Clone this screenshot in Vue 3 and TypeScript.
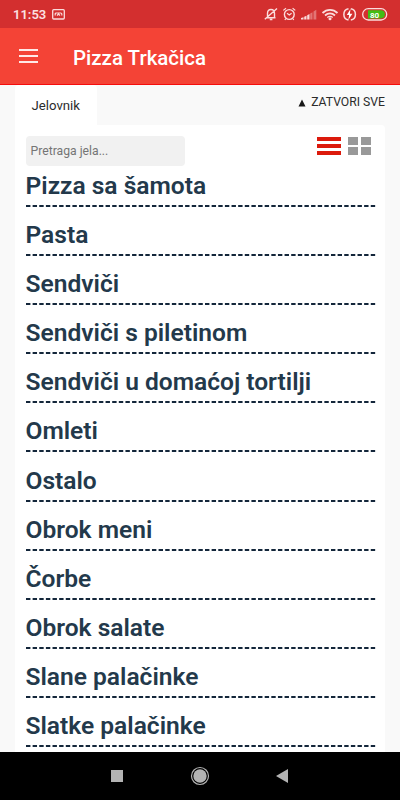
<script setup lang="ts">
const categories: string[] = [
  'Pizza sa šamota',
  'Pasta',
  'Sendviči',
  'Sendviči s piletinom',
  'Sendviči u domaćoj tortilji',
  'Omleti',
  'Ostalo',
  'Obrok meni',
  'Čorbe',
  'Obrok salate',
  'Slane palačinke',
  'Slatke palačinke',
]
</script>

<template>
  <div class="screen">
    <div class="status">
      <span class="clock">11:53</span>
      <svg class="voicemail" width="13" height="11" viewBox="0 0 13 11" fill="none" stroke="#fbdcdc">
        <rect x=".7" y=".7" width="11.6" height="9.3" rx="1" stroke-width="1.3" />
        <path d="M3.200 6.500V5a1 1 0 0 1 1-1h4.600a1 1 0 0 1 1 1v1.500M5 6.500l1.500-1.500L8 6.500" stroke-width="1.200" />
      </svg>
      <svg class="tray" width="128" height="16" viewBox="0 0 128 16" fill="none" stroke="#fbdcdc" stroke-width="1.2">
        <path d="M2.500 11.800h9M3.500 11.500V7.500c0-2.500 1.300-4 3.500-4s3.500 1.500 3.500 4v4M5.800 13.500h2.600M.8 13.300L13 2.500" stroke-width="1.400" />
        <circle cx="25.300" cy="8.500" r="4.900" stroke-width="1.400" />
        <path d="M23 7.200l2.300 1.800 2.300-1.800M19.300 4.400l2.700-2.100M31.300 4.400l-2.700-2.100M22 12.500l-1.200 1.500M28.600 12.500l1.200 1.500" />
        <g stroke="none" fill="#fbdcdc">
          <path d="M37 13.500v-1.500l2.500-.8v2.300zM40.200 13.500v-2.800l2.300-1v3.800zM43.200 13.500V9.300l2.300-1.200v5.400z" />
          <path d="M46.200 13.500V7.500l2.300-1.200v7.200zM49.500 13.500V5.500l2.800-1.800v9.800z" opacity=".4" />
          <circle cx="66" cy="12.800" r="1.500" />
        </g>
        <path d="M58.500 7c4.300-4.200 10.700-4.200 15 0M61 9.500c3-2.700 7-2.700 10 0" stroke-width="1.800" />
        <path d="M63.300 11.500c1.600-1.300 3.800-1.300 5.400 0" stroke-width="1.300" />
        <path d="M84.500 2.800a5.700 5.700 0 0 0 0 11.200M86.800 2.800a5.700 5.700 0 0 1 0 11.200" stroke-width="1.500" />
        <path d="M86.500 3L82.800 9h2.300l-.7 4.800L88.400 7.700h-2.500z" fill="#fff" stroke="none" />
        <rect x="98.700" y="2.700" width="24" height="11.300" rx="5.600" stroke-width="1.300" />
        <path d="M104 4.200h12.800a4.100 4.100 0 0 1 0 8.200h-12.800z" fill="#43bd15" stroke="none" />
        <text x="110.500" y="11.500" class="level" text-anchor="middle">80</text>
      </svg>
    </div>

    <header class="appbar">
      <div class="burger"><i /><i /><i /></div>
      <h1>Pizza Trkačica</h1>
    </header>

    <main class="page">
      <div class="tabs">
        <div class="tab">Jelovnik</div>
        <div class="close-all">
          <svg width="8" height="8" viewBox="0 0 8 8"><path d="M4 .5L7.500 7.500h-7z" fill="#171717" /></svg>
          <span>ZATVORI SVE</span>
        </div>
      </div>
      <section class="card">
        <div class="tools">
          <input class="search" type="text" placeholder="Pretraga jela..." />
          <div class="views">
            <div class="list-view"><i /><i /><i /></div>
            <div class="grid-view"><i /><i /><i /><i /></div>
          </div>
        </div>
        <div class="menu">
          <div v-for="name in categories" :key="name" class="row">
            <h2>{{ name }}</h2>
            <svg class="dashes" width="350" height="2"><path d="M0 1h349.500" /></svg>
          </div>
        </div>
      </section>
    </main>

    <nav class="navbar">
      <svg width="400" height="48" viewBox="0 0 400 48" fill="#b3b3b3">
        <rect x="111" y="18" width="12" height="12" />
        <circle cx="200" cy="24" r="6.700" />
        <circle cx="200" cy="24" r="8.500" fill="none" stroke="#b3b3b3" stroke-width="1.200" />
        <path d="M276 24l12-7v14z" />
      </svg>
    </nav>
  </div>
</template>

<style>
body {
  margin: 0;
  overflow: hidden;
}
</style>

<style scoped>
.screen {
  width: 400px;
  height: 800px;
  display: flex;
  flex-direction: column;
  overflow: hidden;
  background: #f9f9f9;
  font-family: Roboto, "Liberation Sans", sans-serif;
}
.screen * {
  box-sizing: border-box;
}
.status {
  height: 28px;
  flex: none;
  display: flex;
  align-items: center;
  padding: 0 8px 0 13px;
  background: #d32f2f;
}
.clock {
  width: 33px;
  padding-top: 1px;
  font-size: 13px;
  line-height: 28px;
  font-weight: 600;
  color: #fbe0e0;
}
.voicemail {
  margin-left: 6px;
}
.tray {
  margin-left: auto;
}
.level {
  font-size: 8px;
  font-weight: 700;
  fill: #fff;
  stroke: none;
}
.appbar {
  height: 57px;
  flex: none;
  display: flex;
  align-items: center;
  padding: 0 19px;
  background: #f44336;
  border-bottom: 1px solid #f50d0d;
}
.burger {
  width: 19px;
  display: grid;
  gap: 4px;
}
.burger i {
  height: 2px;
  background: #ffe9e7;
}
.appbar h1 {
  margin: 4px 0 0 35px;
  font-size: 20.500px;
  line-height: 24px;
  font-weight: 500;
  color: #fff;
}
.page {
  flex: 1;
  min-height: 0;
  display: flex;
  flex-direction: column;
  padding: 0 15px;
}
.tabs {
  height: 40px;
  flex: none;
  display: flex;
  justify-content: space-between;
}
.tab {
  width: 82px;
  padding-left: 16.500px;
  background: #fff;
  border-radius: 4px 4px 0 0;
  font-size: 13.200px;
  line-height: 41px;
  color: #2b2b2b;
}
.close-all {
  display: flex;
  align-items: center;
  gap: 5px;
  height: 34px;
  font-size: 12.200px;
  color: #2b2b2b;
}
.close-all svg {
  margin-top: 2px;
}
.card {
  flex: 1;
  min-height: 0;
  background: #fff;
  border-radius: 0 4px 0 0;
  padding: 11px 10px 0 10.500px;
}
.tools {
  height: 34px;
  display: flex;
  justify-content: space-between;
}
.search {
  width: 159.500px;
  height: 30px;
  padding: 0 5px;
  border: 0;
  border-radius: 4px;
  background: #f1f1f1;
  font: 12.200px Roboto, sans-serif;
}
.search::placeholder {
  color: #757575;
}
.views {
  display: flex;
  gap: 7px;
  padding: 1px 4px 0 0;
}
.list-view {
  width: 24.500px;
  display: flex;
  flex-direction: column;
  gap: 3px;
}
.list-view i {
  height: 4px;
  background: #dc1a0c;
}
.grid-view {
  width: 23px;
  display: grid;
  grid-template-columns: 10px 10px;
  grid-template-rows: 8px 8px;
  gap: 2px 3px;
}
.grid-view i {
  background: #999;
}
.row {
  height: 49.100px;
}
.row h2 {
  margin: 0;
  padding-top: 2px;
  height: 35px;
  font-size: 24.550px;
  line-height: 28px;
  font-weight: 600;
  color: #23394b;
  white-space: nowrap;
}
.dashes {
  display: block;
  stroke: #13263a;
  stroke-width: 2;
  stroke-dasharray: 4.400 2.230;
}
.navbar {
  height: 48px;
  flex: none;
  background: #000;
}
.navbar svg {
  display: block;
}
</style>
